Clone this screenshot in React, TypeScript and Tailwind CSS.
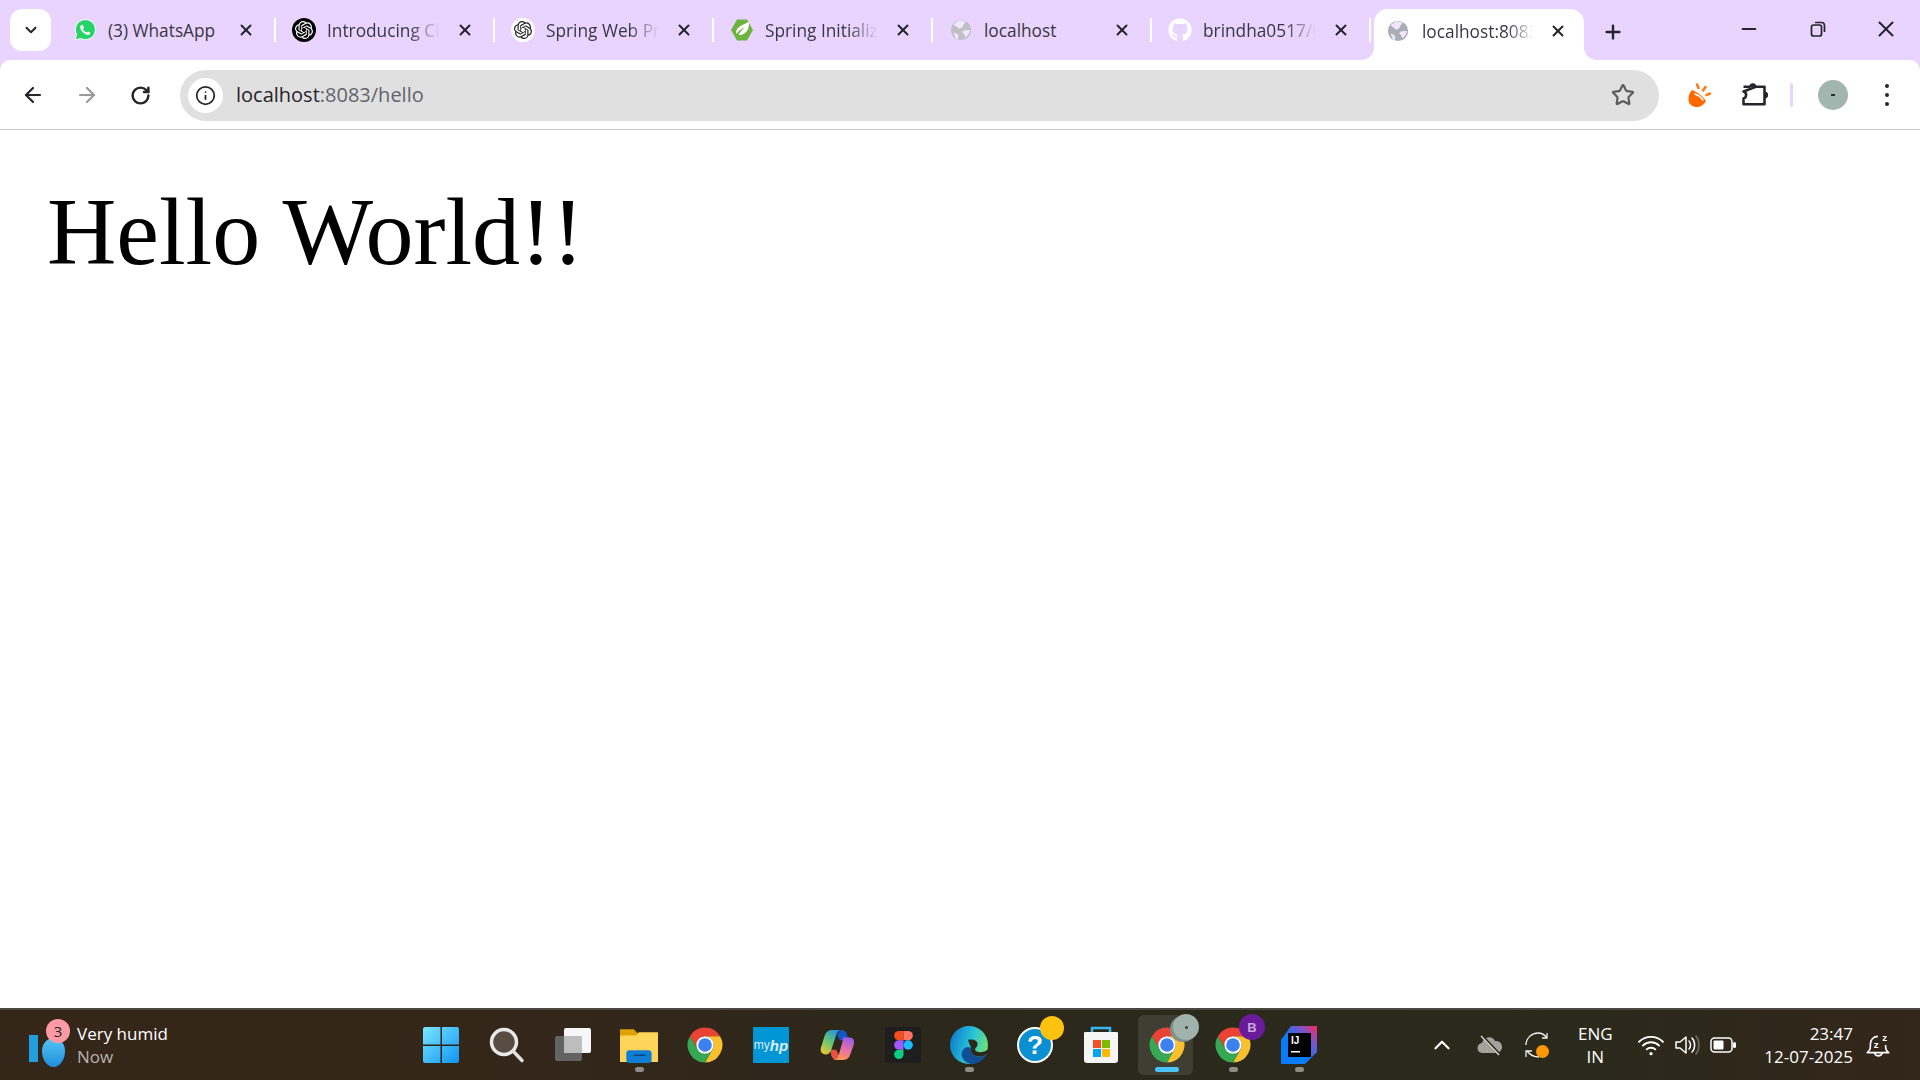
import type { ReactNode } from "react";
import { FaGithub } from "react-icons/fa";
import { SiOpenai } from "react-icons/si";
import {
  ArrowLeft,
  ArrowRight,
  ChevronDown,
  ChevronUp,
  Info,
  Minus,
  Plus,
  RotateCw,
  Star,
  X,
} from "lucide-react";

const ui = "font-['Open_Sans','Noto_Sans',sans-serif]";

const Globe = ({ dark = "#bfbfc4" }: { dark?: string }) => (
  <svg viewBox="0 0 24 24" className="h-[22px] w-[22px]">
    <circle cx="12" cy="12" r="11" fill={dark} />
    <path d="M9 2c-1 2-4 2-5 4 1 2 4 2 5 4 2 1 4 0 5-2 0-2 2-3 3-5-2-1-5-2-8-1z" fill="#f2e6ff" />
    <path d="M14 13c2-1 5-1 8-1-1 3-2 6-5 8-1-1-1-3-2-4-1 0-2-2-1-3zM4 15c2 0 4 1 5 3 0 2 0 3-1 4-2-1-3-4-4-7z" fill="#f2e6ff" />
  </svg>
);

const WhatsAppIcon = () => (
  <svg viewBox="0 0 24 24" className="h-[24px] w-[24px]">
    <path d="M2 22l1.600-5.600A10 10 0 1 1 7.600 20.400z" fill="#25d366" stroke="#fff" strokeWidth="1" />
    <path d="M8.800 6.800c-.4 0-1.600 1-1.600 2.500 0 3.200 4.500 7.600 7.800 7.600 1.600 0 2.500-1.200 2.500-1.800 0-.6-2.200-1.700-2.600-1.700-.5 0-.9 1-1.300 1-1 0-3.600-2.400-3.600-3.400 0-.5.9-.8.9-1.300 0-.4-1.100-2.900-1.600-2.900z" fill="#fff" />
  </svg>
);

const SpringIcon = () => (
  <svg viewBox="0 0 24 24" className="h-[24px] w-[24px]">
    <path d="M7 1.500h10l6 10.500-6 10.500H7L1 12z" fill="#6db33f" />
    <path d="M19 4c.5 6-2 12-9 13-2 0-3-1-4-2 0-6 6-8 13-11z" fill="#fff" />
    <path d="M5 18c2-4 6-7 10-9-3 3-6 6-8 10z" fill="#6db33f" />
  </svg>
);

const ChromeIcon = () => (
  <svg viewBox="0 0 24 24" className="h-[38px] w-[38px]">
    <path d="M2.470 6.500A11 11 0 0 1 21.530 6.500H12A5.500 5.500 0 0 0 7.240 14.750Z" fill="#ea4335" />
    <path d="M21.530 6.500A11 11 0 0 1 12 23L16.760 14.750A5.500 5.500 0 0 0 12 6.500Z" fill="#fbc02d" />
    <path d="M12 23A11 11 0 0 1 2.470 6.500L7.240 14.750A5.500 5.500 0 0 0 16.760 14.750Z" fill="#34a853" />
    <circle cx="12" cy="12" r="5.500" fill="#fff" />
    <circle cx="12" cy="12" r="4.300" fill="#3b82f0" />
  </svg>
);

const WinIcon = () => (
  <svg viewBox="0 0 36 36" className="h-[36px] w-[36px]">
    <defs>
      <linearGradient id="w" x1="0" y1="0" x2="1" y2="1">
        <stop offset="0" stopColor="#7ae6ff" />
        <stop offset="1" stopColor="#0f94f5" />
      </linearGradient>
    </defs>
    <rect width="36" height="36" rx="2" fill="url(#w)" />
    <path d="M17.500 0h1.500v36h-1.500zM0 17.500h36V19H0z" fill="#2c2418" />
  </svg>
);

const SearchIcon = () => (
  <svg viewBox="0 0 36 36" className="h-[36px] w-[36px]">
    <circle cx="15" cy="15" r="12.500" fill="#574b42" stroke="#e8e8e8" strokeWidth="3.500" />
    <path d="M24.500 24.500 33 33.500" stroke="#e0e0e0" strokeWidth="3.500" strokeLinecap="round" />
  </svg>
);

const TaskViewIcon = () => (
  <svg viewBox="0 0 36 36" className="h-[36px] w-[36px]">
    <rect x="0" y="9" width="27" height="25" rx="2" fill="#636363" />
    <rect x="9" y="1" width="27" height="25" rx="2" fill="#f7f7f7" />
    <rect x="9" y="9" width="18" height="17" fill="#bdbdbd" />
  </svg>
);

const FolderIcon = () => (
  <svg viewBox="0 0 36 36" className="h-[38px] w-[38px]">
    <path d="M0 3h13l4 4h19v27H0z" fill="#e0a100" />
    <path d="M0 9h15l3-3h18v28H0z" fill="#ffd559" />
    <rect x="6" y="23" width="24" height="12" rx="3" fill="#0f7fd6" />
    <rect x="13" y="27" width="11" height="1.500" fill="#04467f" />
  </svg>
);

const HpIcon = () => (
  <div className="flex h-[36px] w-[36px] items-center justify-center bg-[#0096d6] font-['Liberation_Sans',sans-serif] text-[12px] leading-none text-[#d9f0fa]">
    my<span className="text-[15px] font-bold italic">hp</span>
  </div>
);

const CopilotIcon = () => (
  <svg viewBox="0 0 36 36" className="h-[36px] w-[34px]">
    <defs>
      <linearGradient id="c1" x1="0.8" y1="0" x2="0.1" y2="1">
        <stop offset="0" stopColor="#1c8ee8" />
        <stop offset="0.55" stopColor="#6cc86a" />
        <stop offset="1" stopColor="#f6c531" />
      </linearGradient>
      <linearGradient id="c2" x1="0.7" y1="0" x2="0.3" y2="1">
        <stop offset="0" stopColor="#9a5be8" />
        <stop offset="0.5" stopColor="#e56fa8" />
        <stop offset="1" stopColor="#fb9a50" />
      </linearGradient>
    </defs>
    <path d="M22 2c4 0 6 2 7 6l1 5H21l-3-6z" fill="#1257c7" />
    <path d="M11 23h6l6 11h-5c-3 0-5-2-6-5z" fill="#e5533f" />
    <path d="M13 2h10c-3 0-5 2-6 6l-5 15c-1 3-3 5-6 5-4 0-6-3-5-7l4-13c1-4 4-6 8-6z" fill="url(#c1)" />
    <path d="M24 10h7c4 0 6 3 5 7l-4 11c-1 4-4 6-8 6H14c3 0 5-2 6-6l4-14c0-2 0-3 0-4z" fill="url(#c2)" />
  </svg>
);

const FigmaIcon = () => (
  <div className="flex h-[36px] w-[36px] items-center justify-center rounded-[2px] bg-[#1e1e1e]">
    <svg viewBox="0 0 24 36" className="h-[28px] w-[19px]">
      <path d="M12 0H6a6 6 0 0 0 0 12h6z" fill="#f24e1e" />
      <path d="M12 0h6a6 6 0 0 1 0 12h-6z" fill="#ff7262" />
      <path d="M12 12H6a6 6 0 0 0 0 12h6z" fill="#a259ff" />
      <circle cx="18" cy="18" r="6" fill="#1abcfe" />
      <path d="M12 24H6a6 6 0 1 0 6 6z" fill="#0acf83" />
    </svg>
  </div>
);

const EdgeIcon = () => (
  <svg viewBox="0 0 36 36" className="h-[38px] w-[38px]">
    <defs>
      <linearGradient id="e1" x1="0" y1="0.3" x2="1" y2="0.6">
        <stop offset="0" stopColor="#0c7ccf" />
        <stop offset="0.55" stopColor="#2ac4d8" />
        <stop offset="1" stopColor="#73e36a" />
      </linearGradient>
    </defs>
    <circle cx="18" cy="18" r="18" fill="url(#e1)" />
    <path d="M36 25c-3 4-9 5-13 3-3-2-4-4-3-7-4-3-9 1-9 6 0 4 4 9 10 9 6 0 12-5 15-11z" fill="#0e4f96" />
    <path d="M17 13c5-1 10 1 9 5 0 2-3 3-2 5 2 3 9 2 12-1v3c-3 4-9 5-13 3-3-2-4-4-3-7-1-3-2-5-3-8z" fill="#2b281b" />
  </svg>
);

const HelpIcon = () => (
  <div className="flex h-[36px] w-[36px] items-center justify-center rounded-full border-2 border-white bg-[#0a8fd1] font-['Liberation_Sans',sans-serif] text-[26px] font-bold leading-none text-white">
    ?
  </div>
);

const StoreIcon = () => (
  <svg viewBox="0 0 36 38" className="h-[38px] w-[36px]">
    <path d="M9 9V2h18v7" fill="none" stroke="#35b7f0" strokeWidth="2.500" />
    <path d="M2 6h32a1 1 0 0 1 1 1v27a3 3 0 0 1-3 3H4a3 3 0 0 1-3-3V7a1 1 0 0 1 1-1z" fill="#f5f5f5" />
    <rect x="10" y="14" width="8" height="8" fill="#f25022" />
    <rect x="19" y="14" width="8" height="8" fill="#7fba00" />
    <rect x="10" y="23" width="8" height="8" fill="#00a4ef" />
    <rect x="19" y="23" width="8" height="8" fill="#ffb900" />
  </svg>
);

const IntellijIcon = () => (
  <svg viewBox="0 0 36 38" className="h-[38px] w-[36px]">
    <defs>
      <linearGradient id="ij" x1="0" y1="1" x2="1" y2="0">
        <stop offset="0.45" stopColor="#087cfa" />
        <stop offset="0.75" stopColor="#7f52c8" />
        <stop offset="1" stopColor="#fe2857" />
      </linearGradient>
    </defs>
    <path d="M0 14 10 0h26v26L24 38H0z" fill="url(#ij)" />
    <rect x="7" y="7" width="23" height="24" fill="#000" />
    <text x="10" y="18" fill="#fff" fontSize="10" fontWeight="700" fontFamily="Liberation Sans, sans-serif">
      IJ
    </text>
    <rect x="10" y="25" width="9" height="1.500" fill="#fff" />
  </svg>
);

const tabs: { title: string; icon: ReactNode; fade?: boolean }[] = [
  { title: "(3) WhatsApp", icon: <WhatsAppIcon /> },
  {
    title: "Introducing ChatGPT",
    fade: true,
    icon: (
      <span className="flex h-[24px] w-[24px] items-center justify-center rounded-full bg-black text-white">
        <SiOpenai size={18} />
      </span>
    ),
  },
  {
    title: "Spring Web Project",
    fade: true,
    icon: (
      <span className="flex h-[24px] w-[24px] items-center justify-center rounded-full bg-white text-[#222]">
        <SiOpenai size={18} />
      </span>
    ),
  },
  { title: "Spring Initializr", fade: true, icon: <SpringIcon /> },
  { title: "localhost", icon: <Globe /> },
  {
    title: "brindha0517/Client",
    fade: true,
    icon: <FaGithub size={24} className="text-white" />,
  },
];

const Tab = ({ title, icon, fade }: { title: string; icon: ReactNode; fade?: boolean }) => (
  <div className="relative flex h-[42px] w-[219px] shrink-0 items-center pl-[16px] pr-[20px]">
    <div className="flex w-[24px] justify-center">{icon}</div>
    <span
      className={`ml-[11px] w-[115px] overflow-hidden whitespace-nowrap pt-[2px] text-[17.300px] leading-[22px] text-[#3a3744] ${
        fade ? "[mask-image:linear-gradient(to_right,black_72%,transparent_98%)]" : ""
      }`}
    >
      {title}
    </span>
    <X size={18} strokeWidth={2.600} className="ml-[14px] text-[#26242c]" />
    <span className="absolute right-[0px] top-[9px] h-[24px] w-[2px] bg-white" />
  </div>
);

const TabStrip = () => (
  <div className="flex h-[60px] items-end bg-[#e9d3ff]">
    <div className="mb-[9px] ml-[10px] flex h-[42px] w-[41px] items-center justify-center rounded-[12px] bg-white">
      <ChevronDown size={18} strokeWidth={2.600} className="text-[#26242c]" />
    </div>
    <div className="mb-[9px] ml-[6px] flex">
      {tabs.map((t) => (
        <Tab key={t.title} {...t} />
      ))}
    </div>
    <div className="relative ml-[3px] flex h-[51px] w-[210px] shrink-0 items-center rounded-t-[14px] bg-white pb-[8px] pl-[13px]">
      <span className="absolute bottom-0 left-[-12px] h-[12px] w-[12px] bg-[radial-gradient(circle_at_0_0,#e9d3ff_11.500px,white_12px)]" />
      <span className="absolute bottom-0 right-[-12px] h-[12px] w-[12px] bg-[radial-gradient(circle_at_100%_0,#e9d3ff_11.500px,white_12px)]" />
      <Globe dark="#a9adb4" />
      <span className="ml-[13px] w-[114px] overflow-hidden whitespace-nowrap pt-[2px] text-[17.300px] leading-[22px] text-[#3a3744] [mask-image:linear-gradient(to_right,black_75%,transparent_98%)]">
        localhost:8083/hello
      </span>
      <X size={18} strokeWidth={2.600} className="ml-[13px] text-[#26242c]" />
    </div>
    <div className="mb-[17px] ml-[17px] flex w-[24px] justify-center">
      <Plus size={22} strokeWidth={2.600} className="text-[#26242c]" />
    </div>
    <div className="mb-[18px] ml-auto flex items-center pr-[21px] text-[#26242c]">
      <Minus size={22} strokeWidth={2} />
      <svg viewBox="0 0 16 16" className="ml-[50px] h-[16px] w-[16px]" fill="none" stroke="currentColor" strokeWidth="1.700">
        <rect x="1.500" y="4" width="10" height="11" rx="2" />
        <path d="M5 1.500h6.500a3 3 0 0 1 3 3V11" />
      </svg>
      <X size={26} strokeWidth={1.800} className="ml-[47px]" />
    </div>
  </div>
);

const Toolbar = () => (
  <div className="bg-[#e9d3ff]">
    <div className="flex h-[70px] items-center rounded-t-[10px] border-b border-[#cbcbcb] bg-white pt-[1px]">
      <ArrowLeft size={24} strokeWidth={2.200} className="ml-[21px] text-[#26242c]" />
      <ArrowRight size={24} strokeWidth={2.200} className="ml-[30px] text-[#9a9a9a]" />
      <RotateCw size={21} strokeWidth={2.800} className="ml-[31px] text-[#26242c]" />
      <div className="ml-[29px] flex h-[51px] w-[1479px] items-center rounded-full bg-[#e0e0e0]">
        <div className="ml-[8px] flex h-[35px] w-[35px] items-center justify-center rounded-full bg-white">
          <Info size={21} strokeWidth={2} className="text-[#26242c]" />
        </div>
        <span className="ml-[13px] text-[20px] leading-none text-[#26242c]">
          localhost<span className="text-[#63636b]">:8083/hello</span>
        </span>
        <Star size={24} strokeWidth={2.200} className="ml-auto mr-[24px] text-[#5c5c5c]" />
      </div>
      <svg viewBox="0 0 24 28" className="ml-[28px] h-[28px] w-[24px]">
        <path d="M5 9c5 2 11 6 14 11-3 6-10 8-15 4C0 21 1 13 5 9z" fill="#ff6a00" />
        <path d="M8 13c3 1 6 3 8 6" stroke="#fff" strokeWidth="1.500" strokeLinecap="round" fill="none" />
        <path d="M11.500 7 10 3.500M16 9.500l2.500-3.500M19.500 14l3.500-1.500" stroke="#ff7a1a" strokeWidth="2.600" strokeLinecap="round" />
      </svg>
      <svg viewBox="0 0 24 24" className="ml-[29px] h-[28px] w-[28px]" fill="#26242c" stroke="#26242c" strokeWidth="2.200" strokeLinejoin="round">
        <path d="M3 5h5.500M13.500 5H21v15H3v-5c3-1 3-5 0-6z" fill="none" />
        <path d="M8.500 5c0-3.500 5-3.500 5 0z" strokeWidth="1" />
        <path d="M21 9.500c3.500 0 3.500 5 0 5z" strokeWidth="1" />
      </svg>
      <span className="ml-[22px] h-[24px] w-[3px] rounded-full bg-[#e9d3ff]" />
      <div className="ml-[25px] flex h-[30px] w-[30px] items-center justify-center rounded-full bg-[#a2b5ae]">
        <span className="h-[2px] w-[4px] bg-[#26322e]" />
      </div>
      <div className="ml-[37px] flex flex-col gap-[5px]">
        <span className="h-[4px] w-[4px] rounded-full bg-[#26242c]" />
        <span className="h-[4px] w-[4px] rounded-full bg-[#26242c]" />
        <span className="h-[4px] w-[4px] rounded-full bg-[#26242c]" />
      </div>
    </div>
  </div>
);

const TaskIcon = ({
  children,
  running,
  active,
  badge,
}: {
  children: ReactNode;
  running?: boolean;
  active?: boolean;
  badge?: ReactNode;
}) => (
  <div className="relative flex h-full w-[66px] items-center justify-center">
    {active && <span className="absolute left-[4px] right-[7px] top-[5px] h-[60px] rounded-[6px] bg-white/10" />}
    <div className="relative flex">
      {children}
      {badge}
    </div>
    {running && (
      <span
        className={`absolute bottom-[8px] h-[5px] rounded-full ${active ? "w-[24px] bg-[#4cc2ff]" : "w-[9px] bg-[#8f8d87]"}`}
      />
    )}
  </div>
);

const AvatarBadge = () => (
  <span className="absolute right-[-13px] top-[-12px] flex h-[26px] w-[26px] items-center justify-center rounded-full bg-[#9fb2ac] shadow-[-3px_2px_0_#7f8f8a]">
    <span className="h-[3px] w-[3px] rounded-full bg-[#33403c]" />
  </span>
);

const Tray = () => (
  <div className="ml-auto flex h-full items-center text-white">
    <ChevronUp size={26} strokeWidth={2} className="mr-[22px]" />
    <svg viewBox="0 0 26 20" className="mr-[22px] h-[22px] w-[26px]">
      <path d="M6 18a5 5 0 0 1-1-10 7 7 0 0 1 13-2 6 6 0 0 1 2 12z" fill="#a3a39d" />
      <path d="M5 1 23 20" stroke="#2a2a1e" strokeWidth="3" />
      <path d="M4 1 22 20" stroke="#e5e5e5" strokeWidth="1.200" />
    </svg>
    <div className="relative mr-[26px] h-[26px] w-[24px]">
      <svg viewBox="0 0 24 26" className="h-[26px] w-[24px]" fill="none" stroke="#f0f0f0" strokeWidth="1.300">
        <path d="M1 13C1 6 7 1 13 1c4 0 7 2 9 5M22 1v5h-5" />
        <path d="M14 25c-5 0-9-2-12-6M1 25v-6h6" />
      </svg>
      <span className="absolute bottom-[0px] right-[0px] h-[13px] w-[13px] rounded-full bg-[#ff9800]" />
    </div>
    <div className={`${ui} mr-[23px] flex w-[40px] flex-col items-center text-[17px] leading-[23px]`}>
      <span>ENG</span>
      <span>IN</span>
    </div>
    <svg viewBox="0 0 24 20" className="mr-[11px] h-[22px] w-[26px]" fill="none" stroke="#fff" strokeWidth="1.700" strokeLinecap="round">
      <path d="M1 7c6-6 16-6 22 0M4.500 10.500c4-4 11-4 15 0M8 14c2-2 6-2 8 0" />
      <circle cx="12" cy="18" r="1.500" fill="#fff" stroke="none" />
    </svg>
    <svg viewBox="0 0 26 22" className="mr-[9px] h-[22px] w-[26px]" fill="none" stroke="#fff" strokeWidth="1.500" strokeLinejoin="round">
      <path d="M1 8v6h4l6 5V3L5 8z" />
      <path d="M14 7c2 2 2 6 0 8M17 4c3.500 3.500 3.500 10.500 0 14" strokeLinecap="round" />
      <path d="M21 2c4 5 4 13 0 18" stroke="#6f6d66" strokeLinecap="round" />
    </svg>
    <svg viewBox="0 0 26 16" className="mr-[28px] h-[16px] w-[26px]">
      <rect x="1" y="1" width="21" height="14" rx="3.500" fill="none" stroke="#fff" strokeWidth="1.500" />
      <rect x="3.500" y="3.500" width="10" height="9" rx="1" fill="#fff" />
      <rect x="23" y="5" width="3" height="6" rx="1.500" fill="#fff" />
    </svg>
    <div className={`${ui} flex flex-col items-end text-[17px] leading-[23px]`}>
      <span>23:47</span>
      <span>12-07-2025</span>
    </div>
    <svg viewBox="0 0 24 24" className="ml-[12px] mr-[29px] h-[26px] w-[26px]" fill="none" stroke="#fff" strokeWidth="1.500" strokeLinejoin="round">
      <path d="M12 4c-4 0-7 3-7 7 0 4 0 6-3 8h20c-3-2-3-4-3-7M9 19c0 4 6 4 7 0" />
      <text x="8" y="15" fontSize="9" fill="#fff" stroke="none" fontWeight="700" fontFamily="Liberation Sans, sans-serif">z</text>
      <text x="16" y="8" fontSize="9" fill="#fff" stroke="none" fontWeight="700" fontFamily="Liberation Sans, sans-serif">z</text>
    </svg>
  </div>
);

const Taskbar = () => (
  <div className="flex h-[72px] shrink-0 border-t-2 border-[#4a4841] bg-[linear-gradient(to_right,#35261a_0%,#35261a_25%,#2b281b_50%,#2a2a1c_80%,#33261a_100%)]">
    <div className="flex w-[408px] shrink-0 items-center pl-[29px]">
      <div className="relative h-[44px] w-[48px]">
        <span className="absolute bottom-[5px] left-0 h-[27px] w-[9px] bg-[#1f9fe0]" />
        <span className="absolute bottom-0 left-[13px] h-[29px] w-[23px] rounded-[50%_50%_50%_50%/45%_45%_55%_55%] bg-[linear-gradient(#58c4f4,#1d8fdb)]" />
        <span className={`${ui} absolute left-[17px] top-[-4px] flex h-[24px] w-[24px] items-center justify-center rounded-full bg-[#ff9aa6] text-[15px] leading-none text-[#222]`}>
          3
        </span>
      </div>
      <div className={`${ui} flex flex-col text-[17px] leading-[23px]`}>
        <span className="text-white">Very humid</span>
        <span className="text-[#b5b3ad]">Now</span>
      </div>
    </div>
    <div className="flex h-full">
      <TaskIcon><WinIcon /></TaskIcon>
      <TaskIcon><SearchIcon /></TaskIcon>
      <TaskIcon><TaskViewIcon /></TaskIcon>
      <TaskIcon running><FolderIcon /></TaskIcon>
      <TaskIcon><ChromeIcon /></TaskIcon>
      <TaskIcon><HpIcon /></TaskIcon>
      <TaskIcon><CopilotIcon /></TaskIcon>
      <TaskIcon><FigmaIcon /></TaskIcon>
      <TaskIcon running><EdgeIcon /></TaskIcon>
      <TaskIcon badge={<span className="absolute right-[-11px] top-[-11px] h-[24px] w-[24px] rounded-full bg-[#ffc20e]" />}>
        <HelpIcon />
      </TaskIcon>
      <TaskIcon><StoreIcon /></TaskIcon>
      <TaskIcon running active badge={<AvatarBadge />}><ChromeIcon /></TaskIcon>
      <TaskIcon
        running
        badge={
          <span className="absolute right-[-13px] top-[-12px] flex h-[26px] w-[26px] items-center justify-center rounded-full bg-[#6a1b9a] font-['Liberation_Sans',sans-serif] text-[13px] font-bold leading-none text-[#c9a8dc]">
            B
          </span>
        }
      >
        <ChromeIcon />
      </TaskIcon>
      <TaskIcon running><IntellijIcon /></TaskIcon>
    </div>
    <Tray />
  </div>
);

export default function App() {
  return (
    <div className={`${ui} flex h-screen w-full flex-col overflow-hidden bg-white`}>
      <TabStrip />
      <Toolbar />
      <main className="min-h-0 flex-1 bg-white pl-[47px] pt-[47px]">
        <h1 className="font-['Liberation_Serif',serif] text-[96px] font-normal leading-[110px] text-black">
          Hello World!!
        </h1>
      </main>
      <Taskbar />
    </div>
  );
}
